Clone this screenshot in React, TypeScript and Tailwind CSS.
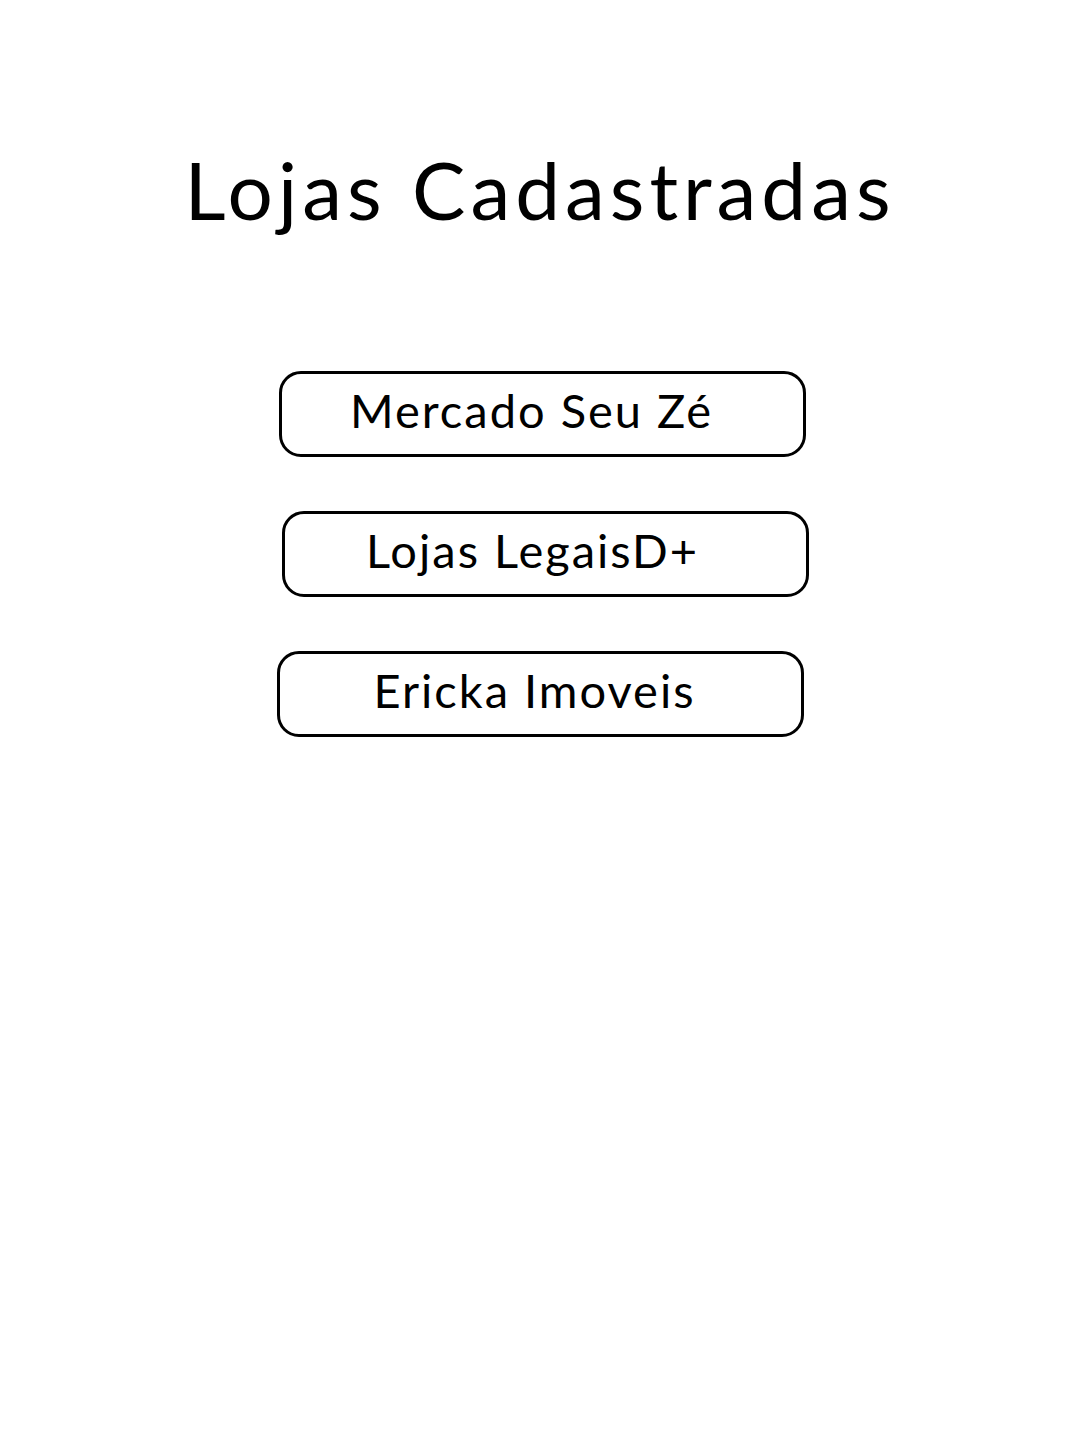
import React from "react";

const stores = [
  { name: "Mercado Seu Zé", cls: "ml-[279px] pr-[22px]" },
  { name: "Lojas LegaisD+", cls: "ml-[282px] pr-[26px]" },
  { name: "Ericka Imoveis", cls: "ml-[277px] pr-[12px]" },
];

export default function App() {
  return (
    <div className="w-[1080px] min-h-[1440px] bg-white text-black" style={{ fontFamily: "Lato, 'Noto Sans', sans-serif" }}>
      <h1 className="pt-[134px] text-center text-[80px] leading-[110px] font-normal tracking-[5px]">Lojas Cadastradas</h1>
      <div className="mt-[127px] flex flex-col gap-[54px]">
        {stores.map((s) => (
          <div
            key={s.name}
            className={`${s.cls} w-[527px] h-[86px] rounded-[22px] border-[3px] border-black flex items-center justify-center pb-[8px] text-[47px] leading-none tracking-[2px]`}
          >
            {s.name}
          </div>
        ))}
      </div>
    </div>
  );
}
